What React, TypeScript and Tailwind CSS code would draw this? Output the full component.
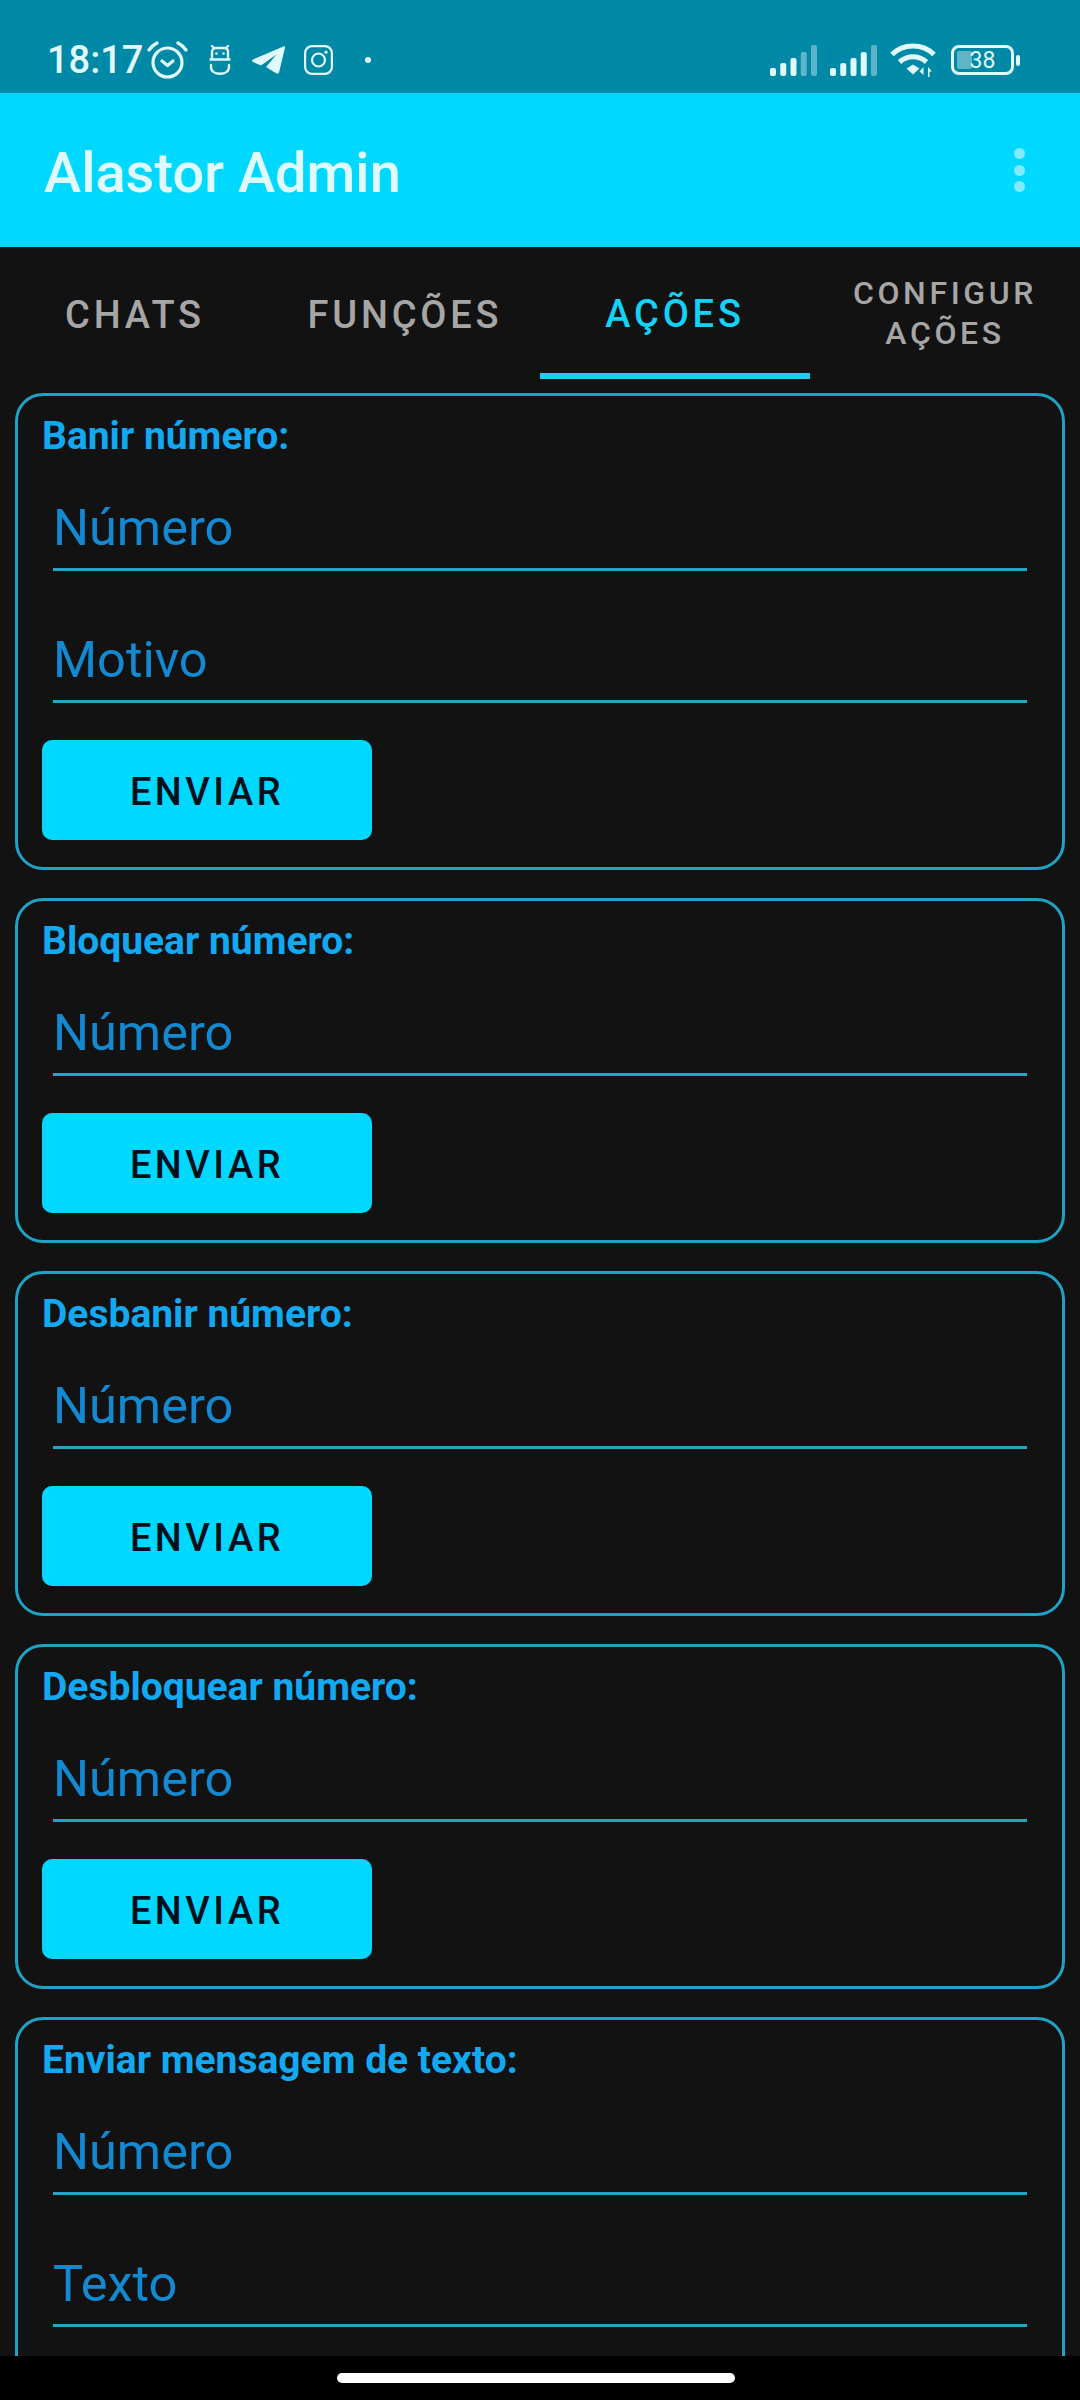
const font = { fontFamily: "Roboto, sans-serif" };

function StatusLeft() {
  return (
    <div className="flex items-center">
      <span className="ml-[47px] w-[100px] text-[38px] leading-none font-medium text-[#e0f9fd]">18:17</span>
      <svg width="41" height="38" viewBox="0 0 41 38" fill="none" stroke="#e0f9fd" strokeWidth="3.200" strokeLinecap="round" strokeLinejoin="round">
        <circle cx="20.500" cy="21.500" r="14.500" />
        <path d="M15 20l5.500 4.500 5.500-4.500" />
        <path d="M2 9c2-3 4.500-5.200 8-7M39 9c-2-3-4.500-5.200-8-7" />
      </svg>
      <svg width="22" height="30" viewBox="0 0 22 30" fill="none" stroke="#e0f9fd" strokeWidth="2.400" strokeLinecap="round" className="ml-[21px]">
        <path d="M3 14V7c0-2.500 1.500-4 4-4h8c2.500 0 4 1.500 4 4v7M1.500 14.500h19M2 20v2c0 4.500 4 6.800 9 6.800s9-2.300 9-6.800v-2" />
        <path d="M3 1l2 2M19 1l-2 2" />
        <circle cx="7.500" cy="8.500" r="1.300" fill="#e0f9fd" stroke="none" />
        <circle cx="14.500" cy="8.500" r="1.300" fill="#e0f9fd" stroke="none" />
      </svg>
      <svg width="33" height="28" viewBox="0 0 33 28" className="ml-[21px]">
        <path d="M32 .300L1 13.500c-1.200.600-1.200 2 0 2.500l8 3.500L24.500 8.500 14 21l10.500 6.500c1.200.600 2.300 0 2.600-1.200L33 1.500C33.200.400 32.800 0 32 .300z" fill="#e0f9fd" />
      </svg>
      <svg width="29" height="30" viewBox="0 0 29 30" fill="none" stroke="#e0f9fd" strokeWidth="2.200" className="ml-[19px]">
        <rect x="1.100" y="1.100" width="26.800" height="27.800" rx="7" />
        <circle cx="14.500" cy="15" r="6.500" />
        <circle cx="22" cy="7.200" r="1.600" fill="#e0f9fd" stroke="none" />
      </svg>
      <span className="ml-[32px] w-[6px] h-[6px] rounded-full bg-[#e0f9fd]" />
    </div>
  );
}

function Signal({ lit }: { lit: number }) {
  const heights = [8, 13, 18, 24, 31];
  return (
    <svg width="47" height="31" viewBox="0 0 47 31">
      {heights.map((h, i) => (
        <rect
          key={i}
          x={i * 10.250}
          y={31 - h}
          width="6"
          height={h}
          rx="2"
          fill={i < lit ? "#e0f9fd" : "#5fb4c8"}
        />
      ))}
    </svg>
  );
}

function StatusRight() {
  return (
    <div className="flex items-center mr-[60px]">
      <Signal lit={3} />
      <div className="w-[13px]" />
      <Signal lit={4} />
      <svg width="46" height="35" viewBox="0 0 46 35" fill="none" stroke="#e0f9fd" strokeWidth="5" className="ml-[13px]">
        <path d="M2 11.500C13 0 33 0 44 11.500" />
        <path d="M9.500 19c8-7 19-7 27 0" />
        <path d="M23 21.500l6.500 4-6.500 6-6.500-6z" fill="#e0f9fd" stroke="none" />
        <path d="M33.500 24l-4 4.500 4 3.500zM38 34V24l4 4.500h-2.500V34z" fill="#e0f9fd" stroke="none" />
      </svg>
      <div className="relative ml-[15px] w-[63px] h-[30px] rounded-[8px] border-[3px] border-[#e0f9fd] flex items-center">
        <div className="absolute left-[3px] top-[3px] bottom-[3px] w-[15px] rounded-[2px] bg-[#5fb4c8]" />
        <span className="relative w-full text-center text-[23px] leading-none text-[#e0f9fd]">38</span>
      </div>
      <div className="ml-[2px] w-[4px] h-[11px] rounded-[2px] bg-[#e0f9fd]" />
    </div>
  );
}

function Field({ label }: { label: string }) {
  return (
    <div className="mx-[35px] h-[114px] pb-[12px] border-b-[3px] border-[#22a5c6] flex items-end">
      <span className="text-[50.500px] leading-[56px] text-[#1289d1]">{label}</span>
    </div>
  );
}

function Card({ title, fields, button = true }: { title: string; fields: string[]; button?: boolean }) {
  return (
    <div className="mx-[15px] mb-[28px] border-[3px] border-[#1fa3c4] rounded-[28px]">
      <div className="ml-[24px] pt-[20px] text-[39px] leading-[41px] font-bold text-[#12a9f2]">{title}</div>
      <div className="flex flex-col gap-[18px]">
        {fields.map((f) => (
          <Field key={f} label={f} />
        ))}
      </div>
      {button ? (
        <div className="ml-[24px] mt-[37px] mb-[27px] w-[330px] h-[100px] pt-[4px] rounded-[10px] bg-[#00d8ff] flex items-center justify-center text-[38px] font-medium tracking-[3.500px] text-[#00101a]">
          ENVIAR
        </div>
      ) : (
        <div className="h-[164px]" />
      )}
    </div>
  );
}

function Tab({ label }: { label: string }) {
  return (
    <div className="w-[270px] pt-[4px] flex items-center justify-center text-[38px] font-medium tracking-[3.800px] text-[#a6a6a6]">
      {label}
    </div>
  );
}

export default function App() {
  return (
    <div className="relative w-[1080px] h-[2400px] overflow-hidden bg-[#121212]" style={font}>
      <div className="h-[93px] pt-[27px] bg-[#0089a6] flex items-center justify-between">
        <StatusLeft />
        <StatusRight />
      </div>
      <div className="h-[154px] bg-[#00d8ff] flex items-center justify-between pl-[44px] pr-[55px]">
        <span className="mt-[6px] text-[56px] font-medium text-[#e0f9fd] leading-none">Alastor Admin</span>
        <div className="flex flex-col gap-[5.500px]">
          <span className="w-[11px] h-[11px] rounded-full bg-[#80ebff]" />
          <span className="w-[11px] h-[11px] rounded-full bg-[#80ebff]" />
          <span className="w-[11px] h-[11px] rounded-full bg-[#80ebff]" />
        </div>
      </div>
      <div className="h-[132px] flex mb-[14px]">
        <Tab label="CHATS" />
        <Tab label="FUNÇÕES" />
        <div className="w-[270px] pt-[8px] border-b-[6px] border-[#1ccdf0] flex items-center justify-center text-[38px] font-medium tracking-[3.800px] text-[#14d2f7]">
          AÇÕES
        </div>
        <div className="w-[270px] flex items-center justify-center text-center text-[32px] leading-[40px] font-medium tracking-[3.600px] text-[#a6a6a6]">
          CONFIGUR<br />AÇÕES
        </div>
      </div>
      <Card title="Banir número:" fields={["Número", "Motivo"]} />
      <Card title="Bloquear número:" fields={["Número"]} />
      <Card title="Desbanir número:" fields={["Número"]} />
      <Card title="Desbloquear número:" fields={["Número"]} />
      <Card title="Enviar mensagem de texto:" fields={["Número", "Texto"]} button={false} />
      <div className="absolute left-0 right-0 bottom-0 h-[44px] bg-black pl-[337px] pt-[17px]">
        <div className="w-[398px] h-[10px] rounded-full bg-white" />
      </div>
    </div>
  );
}
